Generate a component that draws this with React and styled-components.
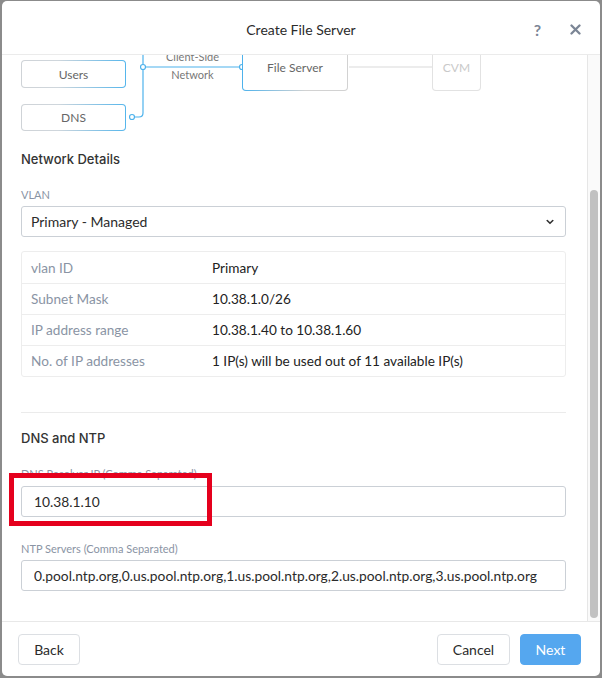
import React, { useLayoutEffect, useRef } from "react";
import styled, { createGlobalStyle } from "styled-components";

const GlobalStyle = createGlobalStyle`
  html, body {
    margin: 0;
    padding: 0;
    background: #8b8b8b;
  }
  body {
    font-family: Lato, "Open Sans", "Liberation Sans", sans-serif;
    color: #333;
  }
  * { box-sizing: border-box; }
`;

const Page = styled.div`
  width: 602px;
  height: 678px;
  padding: 1px 2px 2px 2px;
`;

const Modal = styled.div`
  width: 598px;
  height: 675px;
  background: #fff;
  border-radius: 5px;
  display: flex;
  flex-direction: column;
  overflow: hidden;
`;

const Header = styled.div`
  height: 54px;
  flex: none;
  border-bottom: 1px solid #ebebeb;
  display: grid;
  grid-template-columns: 1fr auto 1fr;
  align-items: center;
  padding-top: 3px;
`;

const Title = styled.div`
  grid-column: 2;
  font-size: 14px;
  color: #2b2b2b;
`;

const HeaderTools = styled.div`
  grid-column: 3;
  justify-self: end;
  display: flex;
  align-items: center;
  gap: 29px;
  padding-right: 19px;
  color: #7b8595;
`;

const Help = styled.span`
  font-size: 16px;
  font-weight: 700;
`;

const Middle = styled.div`
  flex: 1;
  min-height: 0;
  display: flex;
`;

const Body = styled.div`
  flex: 1;
  overflow: hidden;
  padding: 100px 21px 30px 19px;
`;

const Track = styled.div`
  width: 13px;
  flex: none;
  background: #fafafa;
  border-left: 1px solid #e6e6e6;
  padding: 135px 2px 0 2px;
`;

const Thumb = styled.div`
  width: 8px;
  height: 428px;
  border-radius: 4px;
  background: #c1c1c1;
`;

/* ---------- diagram ---------- */

const Diagram = styled.div`
  position: relative;
  height: 153px;
`;

const Wires = styled.svg`
  position: absolute;
  left: 0;
  top: 0;
`;

const Node = styled.div`
  position: absolute;
  left: ${(p) => p.$x}px;
  top: ${(p) => p.$y}px;
  width: ${(p) => p.$w}px;
  height: ${(p) => p.$h}px;
  display: flex;
  align-items: center;
  justify-content: center;
  font-size: 12px;
  color: ${(p) => (p.$muted ? "#c9c9c9" : "#666")};
  border: 1px solid transparent;
  border-radius: 4px;
  background: ${(p) =>
    p.$muted
      ? "linear-gradient(#fff, #fff) padding-box, linear-gradient(#e2e2e2, #e2e2e2) border-box"
      : p.$flip
      ? "linear-gradient(#fff, #fff) padding-box, linear-gradient(90deg, #4db2ec 0%, #d2d2d2 60%) border-box"
      : "linear-gradient(#fff, #fff) padding-box, linear-gradient(90deg, #cfd3d7 0%, #cfd6dc 35%, #55b6ec 100%) border-box"};
`;

const WireLabel = styled.div`
  position: absolute;
  left: 122px;
  width: 99px;
  top: ${(p) => p.$y}px;
  text-align: center;
  font-size: 11px;
  line-height: 14px;
  color: #777;
`;

/* ---------- form ---------- */

const SectionTitle = styled.div`
  font-family: Inter, Lato, sans-serif;
  font-size: 13px;
  font-weight: 500;
  line-height: 16px;
  color: #333;
  margin-top: ${(p) => p.$top}px;
`;

const Field = styled.div`
  position: relative;
  margin-top: ${(p) => p.$top}px;
`;

const Label = styled.div`
  font-size: 11px;
  line-height: 14px;
  color: #8a94a4;
  margin-bottom: ${(p) => p.$gap || 4}px;
`;

const Select = styled.div`
  height: 31px;
  border: 1px solid #cbd0d6;
  border-radius: 3px;
  padding: 0 11px 0 9px;
  display: flex;
  align-items: center;
  justify-content: space-between;
  font-size: 14px;
  color: #2b2b2b;
`;

const Input = styled.input`
  display: block;
  width: 100%;
  height: 31px;
  border: 1px solid #cbd0d6;
  border-radius: 3px;
  padding: 0 12px;
  font-family: Lato, "Open Sans", "Liberation Sans", sans-serif;
  font-size: 13.8px;
  color: #2b2b2b;
  background: #fff;
  outline: none;
`;

const Table = styled.div`
  margin-top: 14px;
  border: 1px solid #ededed;
  border-radius: 3px;
`;

const Row = styled.div`
  display: grid;
  grid-template-columns: 181px 1fr;
  align-items: center;
  height: 31px;
  padding-left: 9px;
  font-size: 13.6px;
  & + & {
    border-top: 1px solid #ededed;
  }
`;

const RowLabel = styled.span`
  color: #8a94a4;
`;

const RowValue = styled.span`
  color: #222;
`;

const Divider = styled.hr`
  border: 0;
  border-top: 1px solid #ebebeb;
  margin: 35px 0 0;
`;

const Highlight = styled.div`
  position: absolute;
  left: -12px;
  top: 6px;
  width: 203px;
  height: 53px;
  border: 5px solid #e5001d;
  pointer-events: none;
`;

/* ---------- footer ---------- */

const Footer = styled.div`
  height: 55px;
  flex: none;
  border-top: 1px solid #e8e8e8;
  display: flex;
  align-items: center;
  justify-content: space-between;
  padding: 0 19px 0 16px;
`;

const Actions = styled.div`
  display: flex;
  gap: 10px;
`;

const Button = styled.button`
  height: 31px;
  min-width: ${(p) => p.$w}px;
  padding: 0 14px;
  border-radius: 4px;
  border: 1px solid ${(p) => (p.$primary ? "#55a7ef" : "#dcdfe3")};
  background: ${(p) => (p.$primary ? "#55a7ef" : "#fff")};
  color: ${(p) => (p.$primary ? "#fff" : "#2b2b2b")};
  font-family: Lato, "Open Sans", "Liberation Sans", sans-serif;
  font-size: 14px;
`;

const CloseIcon = () => (
  <svg width="11" height="11" viewBox="0 0 11 11">
    <path d="M1.5 1.5 L9.5 9.5 M9.5 1.5 L1.5 9.5" stroke="#7b8595" strokeWidth="2.3" strokeLinecap="round" />
  </svg>
);

const Chevron = () => (
  <svg width="8" height="6" viewBox="0 0 8 6">
    <path d="M1.2 1.5 L4 4.3 L6.8 1.5" stroke="#333" strokeWidth="1.6" fill="none" strokeLinecap="round" strokeLinejoin="round" />
  </svg>
);

const BLUE = "#4db2ec";

const NetworkDiagram = () => (
  <Diagram>
    <Wires width="545" height="153">
      <path d="M122 0 V135 Q122 139 118 139 H113.5" stroke={BLUE} strokeWidth="1.2" fill="none" />
      <path d="M122 89 H221" stroke={BLUE} strokeWidth="1.2" />
      <path d="M328 89 H411" stroke="#d9d9d9" strokeWidth="1" />
      <circle cx="111" cy="139" r="2.5" fill="#fff" stroke={BLUE} strokeWidth="1.2" />
      <circle cx="122" cy="89" r="2.5" fill="#fff" stroke={BLUE} strokeWidth="1.2" />
      <circle cx="221" cy="89" r="2.5" fill="#fff" stroke={BLUE} strokeWidth="1.2" />
    </Wires>
    <Node $x={0} $y={82} $w={105} $h={28}>Users</Node>
    <Node $x={0} $y={126} $w={105} $h={27}>DNS</Node>
    <WireLabel $y={72}>Client-Side</WireLabel>
    <WireLabel $y={90}>Network</WireLabel>
    <Node $x={221} $y={66} $w={106} $h={47} $flip>File Server</Node>
    <Node $x={411} $y={66} $w={49} $h={47} $muted>CVM</Node>
  </Diagram>
);

const details = [
  ["vlan ID", "Primary"],
  ["Subnet Mask", "10.38.1.0/26"],
  ["IP address range", "10.38.1.40 to 10.38.1.60"],
  ["No. of IP addresses", "1 IP(s) will be used out of 11 available IP(s)"],
];

export default function App() {
  const bodyRef = useRef(null);

  useLayoutEffect(() => {
    if (bodyRef.current) bodyRef.current.scrollTop = bodyRef.current.scrollHeight;
  }, []);

  return (
    <Page>
      <GlobalStyle />
      <Modal>
        <Header>
          <Title>Create File Server</Title>
          <HeaderTools>
            <Help>?</Help>
            <CloseIcon />
          </HeaderTools>
        </Header>

        <Middle>
          <Body ref={bodyRef}>
            <NetworkDiagram />

            <SectionTitle $top={20}>Network Details</SectionTitle>
            <Field $top={21}>
              <Label>VLAN</Label>
              <Select>
                <span>Primary - Managed</span>
                <Chevron />
              </Select>
            </Field>

            <Table>
              {details.map(([k, v]) => (
                <Row key={k}>
                  <RowLabel>{k}</RowLabel>
                  <RowValue>{v}</RowValue>
                </Row>
              ))}
            </Table>

            <Divider />

            <SectionTitle $top={17}>DNS and NTP</SectionTitle>
            <Field $top={21}>
              <Label $gap={5}>DNS Resolver IP (Comma Separated)</Label>
              <Input readOnly defaultValue="10.38.1.10" />
              <Highlight />
            </Field>
            <Field $top={25}>
              <Label>NTP Servers (Comma Separated)</Label>
              <Input
                readOnly
                defaultValue="0.pool.ntp.org,0.us.pool.ntp.org,1.us.pool.ntp.org,2.us.pool.ntp.org,3.us.pool.ntp.org"
              />
            </Field>
          </Body>
          <Track>
            <Thumb />
          </Track>
        </Middle>

        <Footer>
          <Button $w={62}>Back</Button>
          <Actions>
            <Button $w={73}>Cancel</Button>
            <Button $w={61} $primary>Next</Button>
          </Actions>
        </Footer>
      </Modal>
    </Page>
  );
}
